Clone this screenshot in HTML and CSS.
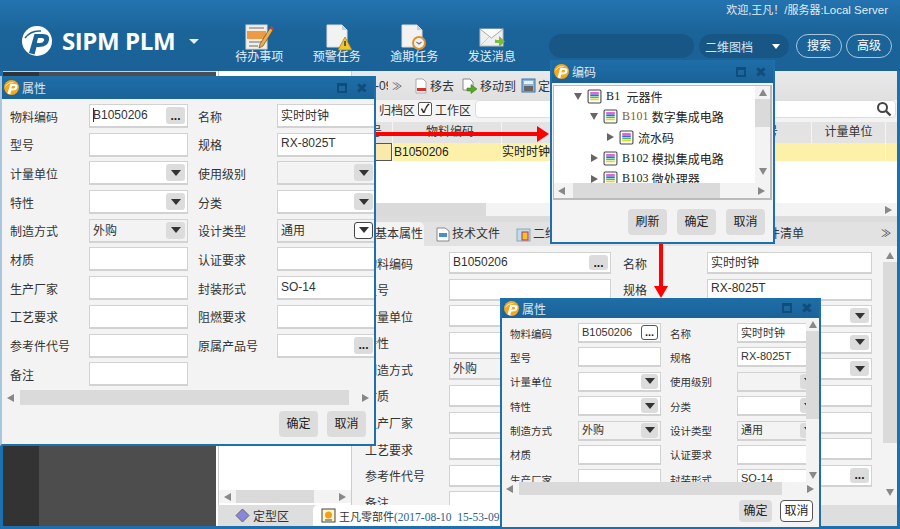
FILE: index.html
```html
<!DOCTYPE html>
<html lang="zh">
<head>
<meta charset="utf-8">
<title>SIPM PLM</title>
<link rel="stylesheet" href="styles.css">
</head>
<body>
<svg class="defs" width="0" height="0">
  <symbol id="logo" viewBox="0 0 30 30">
    <circle cx="15" cy="15" r="15" fill="currentColor"/>
    <path d="M7 27 L12.500 8 H21 Q28 8 27 14 Q26 21 17 21 H14.500 L12.500 28.500 Z" fill="var(--logo-p)"/>
    <path d="M16 12 H20 Q22.500 12 22 14.500 Q21 17 18 17 H14.800 Z" fill="currentColor"/>
    <path d="M3 12 Q9 4 19 5" stroke="var(--logo-p)" stroke-width="1.500" fill="none"/>
  </symbol>
  <symbol id="tree" viewBox="0 0 14 14">
    <rect x="1" y="1" width="12" height="12" rx="1" fill="#fff" stroke="#444"/>
    <rect x="3" y="3" width="8" height="1.500" fill="#e83bd0"/>
    <rect x="3" y="5" width="8" height="1.500" fill="#3a5fe0"/>
    <rect x="3" y="7" width="8" height="1.500" fill="#35c06a"/>
    <rect x="3" y="9" width="8" height="1.500" fill="#f0d020"/>
  </symbol>
</svg>

<div class="app">
  <header class="topbar">
    <div class="brand">
      <svg class="brand-logo"><use href="#logo"/></svg>
      <span class="brand-name">SIPM PLM</span>
      <span class="brand-caret"></span>
    </div>
    <nav class="quick">
      <div class="quick-item">
        <svg width="30" height="30" viewBox="0 0 30 30"><rect x="2" y="3" width="21" height="24" fill="#f1efe6" stroke="#d8d8d8"/><rect x="3" y="9" width="19" height="8" fill="#ee9a45"/><path d="M5 6h15M5 20h13M5 24h9" stroke="#999" stroke-width="1.500"/><path d="M16 22 L26 6 L29 8 L19 24 L15 26 Z" fill="#e8b04c" stroke="#6d4a1c" stroke-width=".7"/><path d="M26 6l3 2 1-2-3-2z" fill="#d13c2c"/></svg>
        <span>待办事项</span>
      </div>
      <div class="quick-item">
        <svg width="30" height="30" viewBox="0 0 30 30"><path d="M5 3H20L25 8V25H5Z" fill="#f2f2f2" stroke="#ddd"/><path d="M20 3V8H25Z" fill="#ccc"/><path d="M23 15 L30 28 H16 Z" fill="#f3c52c" stroke="#a8831a" stroke-width=".8"/><path d="M23 19v5" stroke="#444" stroke-width="1.600"/></svg>
        <span>预警任务</span>
      </div>
      <div class="quick-item">
        <svg width="30" height="30" viewBox="0 0 30 30"><path d="M3 3H18L23 8V25H3Z" fill="#f2f2f2" stroke="#ddd"/><path d="M18 3V8H23Z" fill="#ccc"/><circle cx="20" cy="21" r="6" fill="#eef0f2" stroke="#e0902c" stroke-width="2"/><path d="M17.500 20l2.500 2 2.500-2" stroke="#777" stroke-width="1.200" fill="none"/></svg>
        <span>逾期任务</span>
      </div>
      <div class="quick-item">
        <svg width="30" height="30" viewBox="0 0 30 30"><rect x="3" y="7" width="23" height="17" fill="#efefef" stroke="#bbb"/><path d="M3 7 L14.500 16 L26 7" fill="#fafafa" stroke="#aaa"/><path d="M3 24 L12 15M26 24 L18 17" stroke="#ccc"/><path d="M18 18h4v-4l6 5.500-6 5.500v-4h-4z" fill="#7cbb3c"/></svg>
        <span>发送消息</span>
      </div>
    </nav>
    <div class="top-right">
      <div class="welcome"><span class="welcome-cn">欢迎,王凡！/服务器:</span>Local Server</div>
      <div class="search-row">
        <div class="search-input"></div>
        <div class="search-type"><span>二维图档</span><i class="white-caret"></i></div>
        <div class="pill">搜索</div>
        <div class="pill">高级</div>
      </div>
    </div>
  </header>

  <div class="workspace">
    <aside class="rail"><div class="rail-dark"></div><div class="rail-mid"></div></aside>

    <div class="content">
      <div class="panes">
        <section class="tree-pane">
          <div class="tree-space"></div>
          <div class="hbar tree-hbar"><i class="arr-l"></i><b class="thumb"></b><i class="arr-r"></i></div>
        </section>

        <section class="main-pane">
          <div class="toolbar">
            <span class="tool tool-a"><em class="clip">-09</em><small>≫</small></span>
            <span class="tool tool-b"><svg width="14" height="16" viewBox="0 0 14 16"><path d="M2 1H9L12 4V15H2Z" fill="#fff" stroke="#aaa"/><rect x="3" y="10" width="9" height="3" fill="#d8302c"/></svg>移去</span>
            <span class="tool tool-c"><svg width="16" height="16" viewBox="0 0 16 16"><path d="M1 1H8L11 4V12H1Z" fill="#fff" stroke="#888"/><path d="M5 10h4V6.500l6 4.500-6 4.500V13H5z" fill="#5aa822" stroke="#2f6d10" stroke-width=".5"/></svg>移动到</span>
            <span class="tool"><svg width="15" height="15" viewBox="0 0 15 15"><rect x="1" y="1" width="13" height="13" fill="#8db6d8" stroke="#3b75a8"/><rect x="3" y="3" width="9" height="3" fill="#e8f0f6"/><rect x="3" y="8" width="9" height="5" fill="#666"/></svg>定</span>
          </div>
          <div class="filter">
            <span class="filter-a">归档区</span>
            <span class="check">✓</span>
            <span>工作区</span>
            <div class="filter-input">
              <svg width="16" height="16" viewBox="0 0 16 16"><circle cx="6.500" cy="6.500" r="4.500" fill="none" stroke="#444" stroke-width="2"/><path d="M10 10l4.500 4.500" stroke="#444" stroke-width="2.400"/></svg>
            </div>
          </div>
          <div class="tbl-head">
            <span class="c-no">号</span>
            <span class="c-code">物料编码</span>
            <span class="c-name"></span>
            <span class="c-model">型号</span>
            <span class="c-unit">计量单位</span>
            <span class="c-end"></span>
          </div>
          <div class="tbl-row">
            <span class="c-no"><i class="cell-mark"></i></span>
            <span class="c-code">B1050206</span>
            <span class="c-name">实时时钟</span>
            <span class="c-model"></span>
            <span class="c-unit"></span>
            <span class="c-end"></span>
          </div>
          <div class="tbl-space"></div>
          <div class="hbar main-hbar"><b class="thumb main-thumb"></b><i class="arr-r"></i></div>
          <div class="sep"></div>
          <div class="tabs">
            <span class="tab tab-on">基本属性</span>
            <span class="tab tab-b"><svg width="14" height="15" viewBox="0 0 14 15"><path d="M1 1H9L13 4V14H1Z" fill="#fff" stroke="#888"/><rect x="3" y="6" width="8" height="4" fill="#4a90c8"/></svg>技术文件</span>
            <span class="tab tab-c"><svg width="15" height="15" viewBox="0 0 15 15"><rect x="1" y="2" width="13" height="12" fill="#bcdcf2" stroke="#8ab"/><rect x="6" y="5" width="6" height="8" fill="#f1c232" stroke="#c33"/></svg>二维</span>
            <span class="tab tab-d">件清单</span>
            <span class="tabs-more">≫</span>
          </div>
          <div class="detail">
            <div class="form form-bg">
              <label>物料编码</label><div class="f">B1050206<i class="dots">...</i></div>
              <label class="l2">名称</label><div class="f">实时时钟</div>
              <label>型号</label><div class="f"></div>
              <label class="l2">规格</label><div class="f">RX-8025T</div>
              <label>计量单位</label><div class="f"></div>
              <label class="l2">使用级别</label><div class="f"><i class="drop"></i></div>
              <label>特性</label><div class="f"></div>
              <label class="l2">分类</label><div class="f"><i class="drop"></i></div>
              <label>制造方式</label><div class="f off">外购</div>
              <label class="l2">设计类型</label><div class="f"><i class="drop"></i></div>
              <label>材质</label><div class="f"></div>
              <label class="l2">认证要求</label><div class="f"></div>
              <label>生产厂家</label><div class="f"></div>
              <label class="l2">封装形式</label><div class="f"></div>
              <label>工艺要求</label><div class="f"></div>
              <label class="l2">阻燃要求</label><div class="f"></div>
              <label>参考件代号</label><div class="f"></div>
              <label class="l2">原属产品号</label><div class="f"><i class="dots">...</i></div>
              <label>备注</label><div class="f"></div>
            </div>
            <div class="vbar detail-vbar"><i class="arr-u"></i><b class="thumb"></b><i class="arr-d"></i></div>
          </div>
        </section>
      </div>

      <div class="bottom-tabs">
        <div class="tab-shape">
          <svg width="15" height="15" viewBox="0 0 15 15"><path d="M7.500 1L14 7.500 7.500 14 1 7.500Z" fill="#8a86d8" stroke="#666"/></svg>
          <span>定型区</span>
        </div>
        <div class="doc-tab">
          <svg width="15" height="15" viewBox="0 0 15 15"><rect x="1" y="1" width="13" height="13" fill="#fff4c8" stroke="#444"/><circle cx="7.500" cy="7" r="3.500" fill="#f0a020"/><path d="M4 12h7" stroke="#444"/></svg>
          <span>王凡零部件<em>(2017-08-10&nbsp;&nbsp;15-53-09)</em></span>
        </div>
      </div>
    </div>
  </div>
</div>

<div class="arrow arrow-h"></div>
<div class="arrow arrow-v"></div>

<div class="dlg dlg-attr">
  <div class="dlg-title">
    <svg class="dlg-logo"><use href="#logo"/></svg><span>属性</span>
    <i class="win-max"></i><i class="win-close">✖</i>
  </div>
  <div class="form form-a">
    <label>物料编码</label><div class="f"><u class="caret"></u>B1050206<i class="dots">...</i></div>
    <label class="l2">名称</label><div class="f">实时时钟</div>
    <label>型号</label><div class="f"></div>
    <label class="l2">规格</label><div class="f">RX-8025T</div>
    <label>计量单位</label><div class="f"><i class="drop"></i></div>
    <label class="l2">使用级别</label><div class="f off"><i class="drop"></i></div>
    <label>特性</label><div class="f"><i class="drop"></i></div>
    <label class="l2">分类</label><div class="f"><i class="drop"></i></div>
    <label>制造方式</label><div class="f off">外购<i class="drop"></i></div>
    <label class="l2">设计类型</label><div class="f off">通用<i class="drop drop-on"></i></div>
    <label>材质</label><div class="f"></div>
    <label class="l2">认证要求</label><div class="f"></div>
    <label>生产厂家</label><div class="f"></div>
    <label class="l2">封装形式</label><div class="f">SO-14</div>
    <label>工艺要求</label><div class="f"></div>
    <label class="l2">阻燃要求</label><div class="f"></div>
    <label>参考件代号</label><div class="f"></div>
    <label class="l2">原属产品号</label><div class="f"><i class="dots">...</i></div>
    <label>备注</label><div class="f"></div>
  </div>
  <div class="hbar dlg-hbar-a"><i class="arr-l"></i><b class="thumb"></b><i class="arr-r"></i></div>
  <div class="dlg-foot foot-a"><span class="btn">确定</span><span class="btn">取消</span></div>
</div>

<div class="dlg dlg-code">
  <div class="dlg-title">
    <svg class="dlg-logo"><use href="#logo"/></svg><span>编码</span>
    <i class="win-max"></i><i class="win-close">✖</i>
  </div>
  <div class="tree-box">
    <div class="tree-main">
      <ul class="tree-list">
        <li class="lv0"><i class="t-down"></i><svg class="t-ico"><use href="#tree"/></svg><b class="root">B1</b>元器件</li>
        <li class="lv1"><i class="t-down"></i><svg class="t-ico"><use href="#tree"/></svg><b class="code">B101</b>数字集成电路</li>
        <li class="lv2"><i class="t-right"></i><svg class="t-ico"><use href="#tree"/></svg>流水码</li>
        <li class="lv1"><i class="t-right"></i><svg class="t-ico"><use href="#tree"/></svg><b>B102</b>模拟集成电路</li>
        <li class="lv1"><i class="t-right"></i><svg class="t-ico"><use href="#tree"/></svg><b>B103</b>微处理器</li>
      </ul>
      <div class="vbar code-vbar"><i class="arr-u"></i><b class="thumb"></b><i class="arr-d"></i></div>
    </div>
    <div class="hbar code-hbar"><i class="arr-l"></i><b class="thumb"></b><i class="arr-r"></i></div>
  </div>
  <div class="dlg-foot foot-code"><span class="btn">刷新</span><span class="btn">确定</span><span class="btn">取消</span></div>
</div>

<div class="dlg dlg-small">
  <div class="dlg-title">
    <svg class="dlg-logo"><use href="#logo"/></svg><span>属性</span>
    <i class="win-max"></i><i class="win-close">✖</i>
  </div>
  <div class="small-body">
    <div class="form form-s">
      <label>物料编码</label><div class="f">B1050206<i class="dots dots-on">...</i></div>
      <label class="l2">名称</label><div class="f">实时时钟</div>
      <label>型号</label><div class="f"></div>
      <label class="l2">规格</label><div class="f">RX-8025T</div>
      <label>计量单位</label><div class="f"><i class="drop"></i></div>
      <label class="l2">使用级别</label><div class="f off"><i class="drop"></i></div>
      <label>特性</label><div class="f"><i class="drop"></i></div>
      <label class="l2">分类</label><div class="f"><i class="drop"></i></div>
      <label>制造方式</label><div class="f off">外购<i class="drop"></i></div>
      <label class="l2">设计类型</label><div class="f off">通用<i class="drop"></i></div>
      <label>材质</label><div class="f"></div>
      <label class="l2">认证要求</label><div class="f"></div>
      <label>生产厂家</label><div class="f"></div>
      <label class="l2">封装形式</label><div class="f">SO-14</div>
    </div>
    <div class="vbar small-vbar"><i class="arr-u"></i><b class="thumb"></b><i class="arr-d"></i></div>
  </div>
  <div class="hbar small-hbar"><i class="arr-l"></i><b class="thumb"></b><i class="arr-r"></i></div>
  <div class="dlg-foot foot-s"><span class="btn">确定</span><span class="btn btn-on">取消</span></div>
</div>
</body>
</html>
```

FILE: styles.css
```css
* { box-sizing: border-box; }
html, body { margin: 0; height: 100%; }
body {
  width: 900px; height: 529px; overflow: hidden; position: relative;
  font: 12px "Liberation Sans", "Noto Sans CJK SC", sans-serif; color: #333;
  background: #1e6fae;
}
i, em, u, small { font-style: normal; text-decoration: none; }
.defs { position: absolute; }

.app { width: 900px; height: 529px; display: flex; flex-direction: column; padding: 0 3px 3px; }

/* header */
.topbar {
  height: 71px; margin: 0 -3px; padding: 0 8px 0 22px; flex: none; display: flex;
  background: linear-gradient(#2473b0, #1a6499 45%, #1a6298); color: #fff;
}
.brand { display: flex; align-items: center; height: 82px; width: 199px; }
.brand-logo { width: 30px; height: 30px; color: #fff; --logo-p: #1a6298; }
.brand-name { font: 700 24px "Open Sans", sans-serif; margin-left: 10px; letter-spacing: -.4px; position: relative; top: -1px; }
.brand-caret { margin-left: 14px; border: 5px solid transparent; border-top: 5px solid #e8eef4; border-bottom: 0; }
.quick { display: flex; width: 329px; }
.quick-item { width: 77.500px; display: flex; flex-direction: column; align-items: center; padding-top: 22px; line-height: 16px; }
.quick-item svg { margin-bottom: -3px; flex: none; }
.quick-item span { color: #e6eef5; }
.top-right { flex: 1; display: flex; flex-direction: column; }
.welcome { text-align: right; padding: 2px 4px 0 0; height: 34px; line-height: 17px; color: #e4edf4; font-size: 11.500px; }
.welcome-cn { font-size: 11px; }
.search-row { display: flex; height: 24px; }
.search-input { width: 145px; background: #185686; border-radius: 12px; }
.search-type {
  width: 90px; margin-left: 5px; background: #185686; border-radius: 12px; display: flex;
  align-items: center; justify-content: space-between; padding: 0 9px 0 6px; color: #d8e4ee;
}
.white-caret { border: 4.500px solid transparent; border-top: 5px solid #fff; border-bottom: 0; }
.pill {
  width: 46px; margin-left: 7px; border: 1px solid #a9c6dc; border-radius: 12px;
  text-align: center; line-height: 22px; color: #fff;
}
.pill + .pill { margin-left: 4px; }

/* workspace */
.workspace { flex: 1; display: flex; min-height: 0; background: #fff; }
.rail { width: 213px; flex: none; display: flex; border-top: 1px solid #ccc; }
.rail-dark { width: 36px; background: #333; }
.rail-mid { flex: 1; background: #4d4d4d; }
.content { flex: 1; margin-left: 2px; min-width: 0; display: flex; flex-direction: column; }
.panes { flex: 1; min-height: 0; display: flex; }
.tree-pane { width: 134px; flex: none; display: flex; flex-direction: column; background: #fff; border-left: 1px solid #ccc; border-right: 1px solid #ccc; }
.tree-space { flex: 1; }
.tree-hbar { height: 13px; margin-bottom: 2px; }
.tree-hbar .thumb { margin-right: 20px; }
.tree-hbar .arr-l { margin: 0 5px; }
.bottom-tabs { height: 21px; flex: none; background: #dedede; display: flex; }
.tab-shape {
  width: 95px; background: #dedede; display: flex; align-items: center;
  padding-left: 17px; gap: 3px;
}
.tab-shape svg, .doc-tab svg { flex: none; }
.doc-tab { width: 187px; flex: none; background: #fff; display: flex; align-items: center; padding-left: 8px; gap: 3px; white-space: nowrap; border-radius: 5px 0 0 0; font-size: 11px; overflow: hidden; }
.doc-tab em { font: 400 11.500px "Liberation Serif", serif; color: #2a5f95; }
.main-pane { flex: 1; display: flex; flex-direction: column; min-width: 0; background: #f3f3f3; }

.toolbar { height: 29px; flex: none; background: linear-gradient(#e9e9e9, #e0e0e0); display: flex; align-items: center; padding-left: 23px; }
.tool { display: flex; align-items: center; gap: 2px; }
.tool-a { width: 39px; }
.clip { width: 13px; overflow: hidden; white-space: nowrap; }
.tool-a small { font-size: 10px; margin-left: 2px; color: #555; }
.tool-b { width: 48px; }
.tool-c { width: 59px; }
.filter { height: 22px; flex: none; display: flex; align-items: center; background: #f3f3f3; padding: 0 0 4px 27px; gap: 3px; }
.check {
  width: 14px; height: 14px; border: 1px solid #555; background: #fff; color: #111; font-weight: 700;
  line-height: 12px; text-align: center; font-size: 12px; border-radius: 2px;
}
.filter-input {
  width: 421px; height: 18px; margin-left: 1px; background: #fff; border: 1px solid #ddd; border-radius: 4px;
  display: flex; justify-content: flex-end; align-items: center; padding-right: 3px;
}
.tbl-head, .tbl-row { display: flex; flex: none; }
.tbl-head { height: 21px; background: #e3e3e3; line-height: 21px; }
.tbl-row { height: 18px; background: #fdf0a8; line-height: 18px; color: #222; }
.tbl-head span, .tbl-row span { border-right: 1px solid #f6f6f0; display: block; height: 100%; }
.c-no { width: 41px; text-align: center; padding-left: 8px; }
.c-code { width: 109px; padding-left: 1px; }
.tbl-head .c-code { padding-left: 33px; }
.c-name { width: 227px; }
.c-model { width: 83px; text-align: center; padding-right: 8px; }
.tbl-head .c-name, .tbl-row .c-model { border-right: 0 !important; }
.c-unit { width: 74px; text-align: center; }
.c-end { flex: 1; border-right: 0 !important; }
.cell-mark { display: block; width: 17px; height: 18px; background: #fbe9a9; border: 1px solid #555; margin-left: 15px; }
.tbl-space { flex: 1; background: #fff; min-height: 0; }
.hbar { display: flex; align-items: center; background: #f3f3f3; position: relative; flex: none; }
.thumb { display: block; background: #dadada; flex: 1; align-self: stretch; }
.arr-l, .arr-r, .arr-u, .arr-d { flex: none; display: block; width: 0; height: 0; border: 4px solid transparent; }
.arr-l { border-right: 7px solid #888; border-left: 0; margin: 0 4px; }
.arr-r { border-left: 7px solid #888; border-right: 0; margin: 0 5px; }
.arr-u { border-bottom: 7px solid #888; border-top: 0; margin: 3px auto; }
.arr-d { border-top: 7px solid #888; border-bottom: 0; margin: 3px auto; }
.main-hbar { height: 13px; }
.main-thumb { flex: none; width: 134px; margin-right: auto; }
.sep { height: 6px; background: #dcdcdc; flex: none; }
.tabs { height: 24px; flex: none; display: flex; align-items: center; background: #e2e2e2; position: relative; line-height: 24px; }
.tab { display: flex; align-items: center; gap: 2px; }
.tab-on { width: 72px; height: 24px; background: #f3f3f3; padding-left: 23px; border-radius: 0 5px 0 0; }
.tab-b { margin-left: 12px; width: 80px; }
.tab-c { width: 255px; }
.tab-d { width: 100px; margin-left: -3px; }
.tabs-more { position: absolute; right: 6px; top: 0; font-size: 10px; }
.detail { height: 259px; flex: none; display: flex; overflow: hidden; }
.form-bg { flex: 1; min-width: 0; }
.detail-vbar { width: 14px; margin: 3px 0 6px; }
.detail-vbar .thumb { height: 181px; }
.detail-vbar .arr-d { margin-top: auto; }

/* form grids */
.form { display: grid; align-content: start; overflow: hidden; }
.form label { white-space: nowrap; display: flex; align-items: center; color: #333; }
.f {
  position: relative; background: #fff; border: 1px solid #d2d2d2; border-bottom-width: 2px; white-space: nowrap;
  display: flex; align-items: center; padding: 0 0 2px 3px; font-size: 12px; color: #333; overflow: hidden;
}
.f.off { background: #f3f3f3; }
.dots, .drop {
  position: absolute; right: 2px; top: 2px; bottom: 2px; width: 19px; border-radius: 3px; background: #dcdcdc;
  display: flex; align-items: center; justify-content: center; color: #222; font-weight: 700; line-height: 1;
}
.drop::after { content: ""; border: 5px solid transparent; border-top: 6px solid #333; border-bottom: 0; }
.drop-on { background: #fff; border: 1px solid #444; }
.dots-on { background: #fff; border: 1px solid #555; }
.caret { width: 1px; height: 14px; background: #333; margin-right: -1px; }

.form-bg { grid-template-columns: 84px 162px 96px 165px; padding: 6px 0 0 13px; grid-auto-rows: 22px; row-gap: 4.600px; }
.form-bg .l2 { margin-left: 12px; }

.form-a { grid-template-columns: 79px 99px 89px 99px; grid-auto-rows: 24px; row-gap: 4.700px; padding: 5px 0 0 8px; height: 291px; flex: none; }
.form-a .l2 { margin-left: 10px; }
.form-s {
  grid-template-columns: 68px 83px 76px 83px; grid-auto-rows: 20px; row-gap: 4.400px; padding: 5px 0 0 8px;
  flex: 1; min-width: 0; height: 164px;
}
.form-s .l2 { margin-left: 9px; }
.form-s .f { font-size: 11px; }
.form-s label { font-size: 10.500px; }
.form-s .drop, .form-s .dots { width: 17px; top: 1px; bottom: 1px; }

/* dialogs: windows on a free canvas */
.dlg { position: absolute; background: #f3f3f3; border: 2px solid #1e6fae; border-top: 0; overflow: hidden; display: flex; flex-direction: column; }
.dlg-title {
  height: 23px; margin: 0 -2px; flex: none; display: flex; align-items: center; padding: 0 6px 0 4px; color: #dde8f1;
  background: linear-gradient(#1f6ea8, #1a6298);
}
.dlg-title span { margin-left: 3px; flex: 1; }
.dlg-logo { width: 15px; height: 15px; color: #f5a81c; --logo-p: #fff; }
.win-max { width: 10px; height: 10px; border: 2px solid #0f4d7c; border-top-width: 3px; margin-right: 9px; }
.win-close { color: #0f4d7c; font: 14px "DejaVu Sans", sans-serif; line-height: 1; width: 14px; }
.dlg-foot { display: flex; justify-content: flex-end; flex: none; }
.btn { background: #dcdcdc; border-radius: 4px; text-align: center; color: #222; }
.btn-on { background: #fff; border: 1px solid #555; }

.dlg-attr { left: 0; top: 76px; width: 376px; height: 370px; border-left-color: #a9c6dc; }
.dlg-hbar-a { height: 15px; }
.dlg-hbar-a .thumb { margin-right: 8px; margin-left: 2px; }
.dlg-hbar-a .arr-l { margin-left: 5px; }
.foot-a { gap: 9px; padding: 6px 8px 0 0; }
.foot-a .btn { width: 39px; height: 26px; line-height: 26px; }

.dlg-code { left: 550px; top: 60px; width: 225px; height: 184px; }
.tree-box { margin: 2px 1px 0; height: 115px; border: 1px solid #bbb; border-width: 1px 2px 2px 1px; background: #fff; display: flex; flex-direction: column; flex: none; }
.tree-main { flex: 1; display: flex; min-height: 0; }
.tree-list { list-style: none; margin: 0; padding: 0; flex: 1; min-width: 0; overflow: hidden; }
.tree-list li { height: 20.600px; display: flex; align-items: center; white-space: nowrap; color: #222; }
.tree-list b { font: 400 12px "Liberation Serif", serif; margin-right: 3px; letter-spacing: .2px; }
.tree-list .root { margin-right: 6px; }
.tree-list .code { color: #8a5a1e; }
.lv0 { padding-left: 20px; }
.lv1 { padding-left: 36px; }
.lv2 { padding-left: 52px; }
.t-down { border: 4px solid transparent; border-top: 7px solid #666; border-bottom: 0; margin-right: 5px; }
.t-right { border: 4px solid transparent; border-left: 7px solid #666; border-right: 0; margin-left: 1px; margin-right: 5px; }
.t-ico { width: 15px; height: 15px; margin-right: 4px; flex: none; }
.code-vbar { width: 15px; }
.code-hbar { height: 15px; }
.code-hbar .thumb { margin: 0 33px 0 4px; }
.vbar { display: flex; flex-direction: column; background: #f3f3f3; flex: none; }
.vbar .thumb { flex: none; }
.code-vbar .thumb { height: 28px; }
.code-vbar .arr-d { margin-top: auto; margin-bottom: 8px; }
.foot-code { gap: 10px; padding: 9px 8px 0 0; }
.foot-code .btn { width: 39px; height: 26px; line-height: 26px; }

.dlg-small { left: 500px; top: 298px; width: 321px; height: 231px; }
.dlg-small .dlg-title { height: 20px; }
.small-body { display: flex; height: 164px; flex: none; overflow: hidden; }
.small-vbar { width: 13px; }
.small-vbar .thumb { height: 88px; }
.small-vbar .arr-d { margin-top: auto; }
.small-hbar { height: 13px; }
.small-hbar .thumb { margin: 0 20px 0 2px; }
.foot-s { gap: 8px; padding: 5px 6px 0 0; }
.foot-s .btn { width: 33px; height: 22px; line-height: 22px; }
.foot-s .btn-on { line-height: 20px; }

/* red callout arrows */
.arrow { position: absolute; background: #f00; }
.arrow-h { left: 376px; top: 132px; width: 162px; height: 4px; }
.arrow-h::after { content: ""; position: absolute; left: 161px; top: -6px; border: 8px solid transparent; border-left: 12px solid #f00; border-right: 0; }
.arrow-v { left: 659px; top: 244px; width: 4px; height: 43px; }
.arrow-v::after { content: ""; position: absolute; left: -5px; top: 42px; border: 7px solid transparent; border-top: 12px solid #f00; border-bottom: 0; }
```
